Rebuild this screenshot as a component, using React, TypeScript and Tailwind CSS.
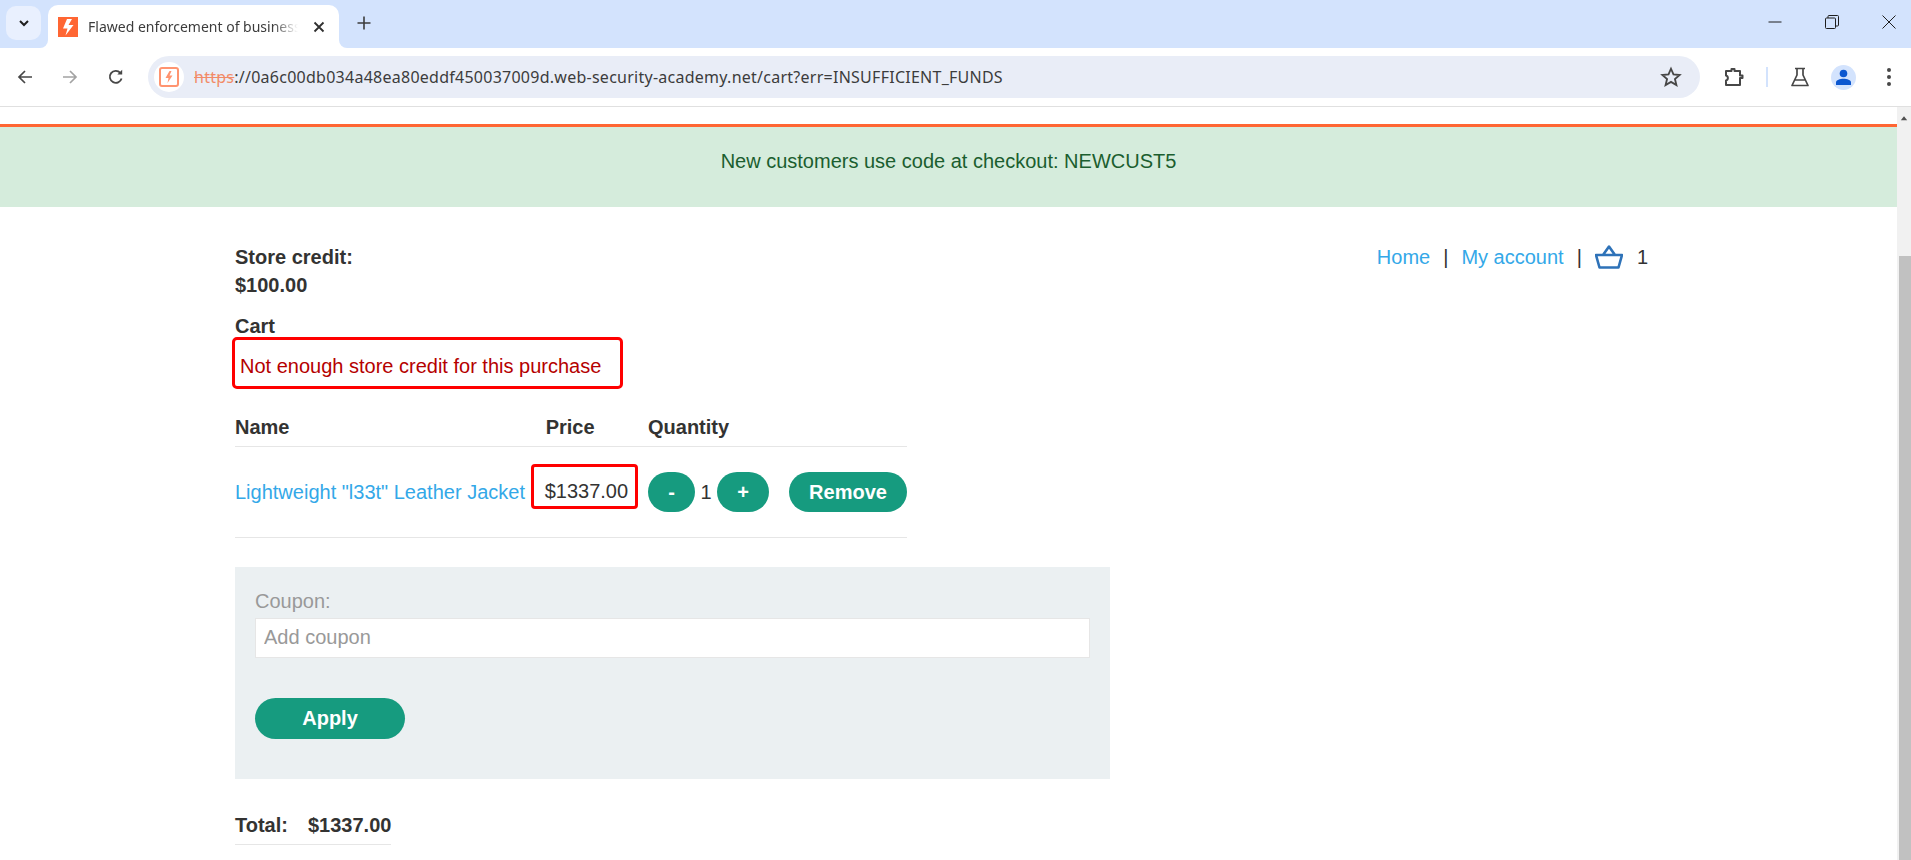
import React from "react";

function ChromeBar() {
  return (
    <div className="font-['Noto_Sans',sans-serif]">
      <div className="relative flex h-12 bg-[#d3e3fd]">
        <div className="mt-[6px] ml-[6px] flex h-[34px] w-[35px] items-center justify-center rounded-[10px] bg-[#e9f0fe]">
          <svg width="14" height="14" viewBox="0 0 14 14" fill="none" stroke="#1f1f1f" strokeWidth="2">
            <path d="M3 5 L7 9 L11 5" />
          </svg>
        </div>
        <div className="relative mt-[5px] ml-[7px] flex h-[43px] w-[291px] items-center rounded-t-[10px] bg-white pl-[10px]">
          <div className="absolute bottom-0 -left-2 h-2 w-2 bg-white">
            <div className="h-2 w-2 rounded-br-lg bg-[#d3e3fd]" />
          </div>
          <div className="absolute -right-2 bottom-0 h-2 w-2 bg-white">
            <div className="h-2 w-2 rounded-bl-lg bg-[#d3e3fd]" />
          </div>
          <svg width="20" height="20" viewBox="0 0 20 20" className="shrink-0">
            <rect width="20" height="20" fill="#ff6633" />
            <path d="M9 2 H14 L10.5 8 H15.5 L7.5 18.5 L9.5 11.5 H5 Z" fill="#fff" />
          </svg>
          <span className="ml-[10px] w-[210px] overflow-hidden text-[14px] whitespace-nowrap text-[#3c3c3c] [mask-image:linear-gradient(to_right,#000_88%,transparent)]">
            Flawed enforcement of business logic
          </span>
          <svg width="12" height="12" viewBox="0 0 12 12" className="ml-[15px] shrink-0" stroke="#303030" strokeWidth="1.8">
            <path d="M1.5 1.5 L10.5 10.5 M10.5 1.5 L1.5 10.5" />
          </svg>
        </div>
        <svg width="14" height="14" viewBox="0 0 14 14" className="mt-[16px] ml-[18px]" stroke="#3c3c3c" strokeWidth="1.6">
          <path d="M7 0.5 V13.5 M0.5 7 H13.5" />
        </svg>
        <div className="ml-auto flex h-[44px] items-center gap-[43px] pr-[15px]">
          <svg width="14" height="14" viewBox="0 0 14 14" stroke="#1f1f1f" strokeWidth="1" fill="none">
            <path d="M0.5 7 H13.5" />
          </svg>
          <svg width="14" height="14" viewBox="0 0 14 14" stroke="#1f1f1f" strokeWidth="1" fill="none">
            <rect x="0.5" y="3" width="10" height="10.5" rx="1" />
            <path d="M3 3 V1.5 a1 1 0 0 1 1 -1 H12.5 a1 1 0 0 1 1 1 V10 a1 1 0 0 1 -1 1 H10.5" />
          </svg>
          <svg width="14" height="14" viewBox="0 0 14 14" stroke="#1f1f1f" strokeWidth="1" fill="none">
            <path d="M0.5 0.5 L13.5 13.5 M13.5 0.5 L0.5 13.5" />
          </svg>
        </div>
      </div>
      <div className="flex h-[59px] items-center rounded-tl-[10px] border-b border-[#e0e0e0] bg-white">
        <div className="flex w-[148px] items-center">
          <svg width="16" height="16" viewBox="0 0 16 16" className="ml-[17px]" fill="none" stroke="#474747" strokeWidth="1.7">
            <path d="M15 8 H2 M8 2 L2 8 L8 14" />
          </svg>
          <svg width="16" height="16" viewBox="0 0 16 16" className="ml-[29px]" fill="none" stroke="#a3a3a3" strokeWidth="1.7">
            <path d="M1 8 H14 M8 2 L14 8 L8 14" />
          </svg>
          <svg width="16" height="16" viewBox="0 0 16 16" className="ml-[30px]" fill="none" stroke="#474747" strokeWidth="1.8">
            <path d="M13.6 9.5 A6 6 0 1 1 12.3 3.8" />
            <path d="M9.3 5.5 L14.2 5.5 L14.2 0.7 Z" fill="#474747" stroke="none" />
          </svg>
        </div>
        <div className="flex h-[42px] w-[1552px] items-center rounded-full bg-[#e9edf7] pl-[6px]">
          <div className="flex h-[30px] w-[30px] items-center justify-center rounded-full bg-white">
            <svg width="20" height="20" viewBox="0 0 20 20">
              <rect x="1" y="1" width="18" height="18" rx="2" fill="none" stroke="#ff9470" strokeWidth="2" />
              <path d="M10.5 4 H12.5 L10.5 8.5 H13.5 L8.5 16 L9.5 11 H6.5 Z" fill="#ff9470" />
            </svg>
          </div>
          <span className="ml-[10px] text-[16px] tracking-[0.016em] whitespace-nowrap text-[#3c3c3c]">
            <span className="text-[#f28b68] line-through">https</span>://0a6c00db034a48ea80eddf450037009d.web-security-academy.net/cart?err=INSUFFICIENT_FUNDS
          </span>
          <svg width="22" height="22" viewBox="0 0 24 24" className="mr-[18px] ml-auto" fill="none" stroke="#474747" strokeWidth="2">
            <path d="M12 3 L14.7 9.2 L21.4 9.8 L16.3 14.2 L17.9 20.8 L12 17.3 L6.1 20.8 L7.7 14.2 L2.6 9.8 L9.3 9.2 Z" />
          </svg>
        </div>
        <svg width="20" height="20" viewBox="0 0 20 20" className="ml-[24px]" fill="none" stroke="#474747" strokeWidth="2">
          <path d="M2 4 H7.5 V2 H10.5 V4 H16 V8.5 H18.5 V11 H16 V18 H2 V13.5 C4.5 13 4.5 9 2 8.5 Z" strokeLinejoin="round" />
        </svg>
        <div className="ml-[22px] h-[20px] w-[2px] bg-[#d3e3fd]" />
        <svg width="20" height="20" viewBox="0 0 20 20" className="ml-[22px]" fill="none" stroke="#474747" strokeWidth="1.7">
          <path d="M5 1.5 H15 M7 1.5 V8 L2 18.5 H18 L13 8 V1.5 M5 13 H15" strokeLinejoin="round" />
        </svg>
        <div className="ml-[21px] flex h-[25px] w-[25px] items-center justify-center rounded-full bg-[#d3e3fd]">
          <svg width="17" height="17" viewBox="0 0 17 17" fill="#0b57d0">
            <circle cx="8.5" cy="4.5" r="3.8" />
            <path d="M1 16 V13.5 C1 11 5 9.8 8.5 9.8 C12 9.8 16 11 16 13.5 V16 Z" />
          </svg>
        </div>
        <svg width="4" height="18" viewBox="0 0 4 18" className="ml-[31px]" fill="#474747">
          <circle cx="2" cy="2" r="2" />
          <circle cx="2" cy="9" r="2" />
          <circle cx="2" cy="16" r="2" />
        </svg>
      </div>
    </div>
  );
}

function Btn({ className, children }: { className: string; children: React.ReactNode }) {
  return (
    <button className={`flex items-center justify-center rounded-[25px] bg-[#169b7f] font-bold text-white ${className}`}>
      {children}
    </button>
  );
}

function Page() {
  return (
    <div className="min-w-0 flex-1 font-['Liberation_Sans',sans-serif] text-[20px] leading-[28px] text-[#333332]">
      <div className="h-[17px] bg-white" />
      <div className="h-[3px] bg-[#ff6633]" />
      <div className="flex h-[80px] items-center justify-center bg-[#d5ecdc] pb-[12px] text-[#1b5e2f]">
        New customers use code at checkout: NEWCUST5
      </div>
      <div className="pt-[36px] pl-[235px]">
        <div className="flex items-start justify-between pr-[249px]">
          <div className="font-bold">
            <div>Store credit:</div>
            <div>$100.00</div>
          </div>
          <div className="flex items-center">
            <a className="text-[#33a8e8]">Home</a>
            <span className="mx-[13px]">|</span>
            <a className="text-[#33a8e8]">My account</a>
            <span className="mx-[13px]">|</span>
            <svg width="28" height="24" viewBox="0 0 28 24" fill="none" stroke="#2e72b8" strokeWidth="2.6" strokeLinejoin="round">
              <path d="M1 10 H27 L23.5 22.5 H4.5 Z M8 10 L14 1.5 L20 10" />
            </svg>
            <span className="ml-[14px]">1</span>
          </div>
        </div>
        <div className="mt-[13px] font-bold">Cart</div>
        <div className="-mt-[3px] ml-[-3px] flex h-[52px] w-[391px] items-center rounded-[5px] border-[3px] border-[#ff0000] pt-[5px] pl-[5px] text-[#b50000]">
          Not enough store credit for this purchase
        </div>
        <table className="mt-[23px] w-[672px] border-collapse">
          <thead>
            <tr className="h-[34px] border-b border-[#e6e6e6] text-left font-bold">
              <th className="w-[296px] p-0 pt-[1px] align-top font-bold">Name</th>
              <th className="w-[118px] p-0 pt-[1px] pl-[15px] align-top font-bold">Price</th>
              <th className="p-0 pt-[1px] align-top font-bold">Quantity</th>
            </tr>
          </thead>
          <tbody>
            <tr className="h-[91px] border-b border-[#e6e6e6]">
              <td className="p-0 whitespace-nowrap text-[#33a8e8]">Lightweight "l33t" Leather Jacket</td>
              <td className="p-0">
                <div className="mb-[10px] flex h-[45px] w-[107px] items-center rounded-[4px] border-[3px] border-[#ff0000] pt-[8px] pl-[11px] whitespace-nowrap">
                  $1337.00
                </div>
              </td>
              <td className="p-0">
                <div className="flex items-center">
                  <Btn className="h-[40px] w-[47px]">-</Btn>
                  <span className="w-[22px] text-center">1</span>
                  <Btn className="h-[40px] w-[52px]">+</Btn>
                  <Btn className="ml-[20px] h-[40px] w-[118px]">Remove</Btn>
                </div>
              </td>
            </tr>
          </tbody>
        </table>
        <div className="mt-[29px] h-[212px] w-[875px] bg-[#ebf0f2] px-[20px] pt-[20px]">
          <div className="mb-[3px] text-[#999]">Coupon:</div>
          <input
            placeholder="Add coupon"
            className="block h-[40px] w-[835px] border border-[#e6e6e6] bg-white px-[8px] text-[20px] placeholder:text-[#999]"
          />
          <Btn className="mt-[40px] h-[41px] w-[150px]">Apply</Btn>
        </div>
        <div className="mt-[32px] w-[156px] border-b border-[#e6e6e6] pb-[5px] font-bold whitespace-nowrap">
          <span>Total:</span>
          <span className="ml-[20px]">$1337.00</span>
        </div>
      </div>
    </div>
  );
}

export default function App() {
  return (
    <div className="flex h-[860px] w-[1911px] flex-col overflow-hidden bg-white">
      <ChromeBar />
      <div className="flex min-h-0 flex-1">
        <Page />
        <div className="flex w-[14px] flex-col items-end bg-[#f1f1f1]">
          <svg width="14" height="17" viewBox="0 0 14 17" className="mt-[2px]" fill="#505050">
            <path d="M3 14 L7 9 L11 14 Z" />
          </svg>
          <div className="mt-[133px] h-full w-[12px] bg-[#c1c1c1]" />
        </div>
      </div>
    </div>
  );
}
